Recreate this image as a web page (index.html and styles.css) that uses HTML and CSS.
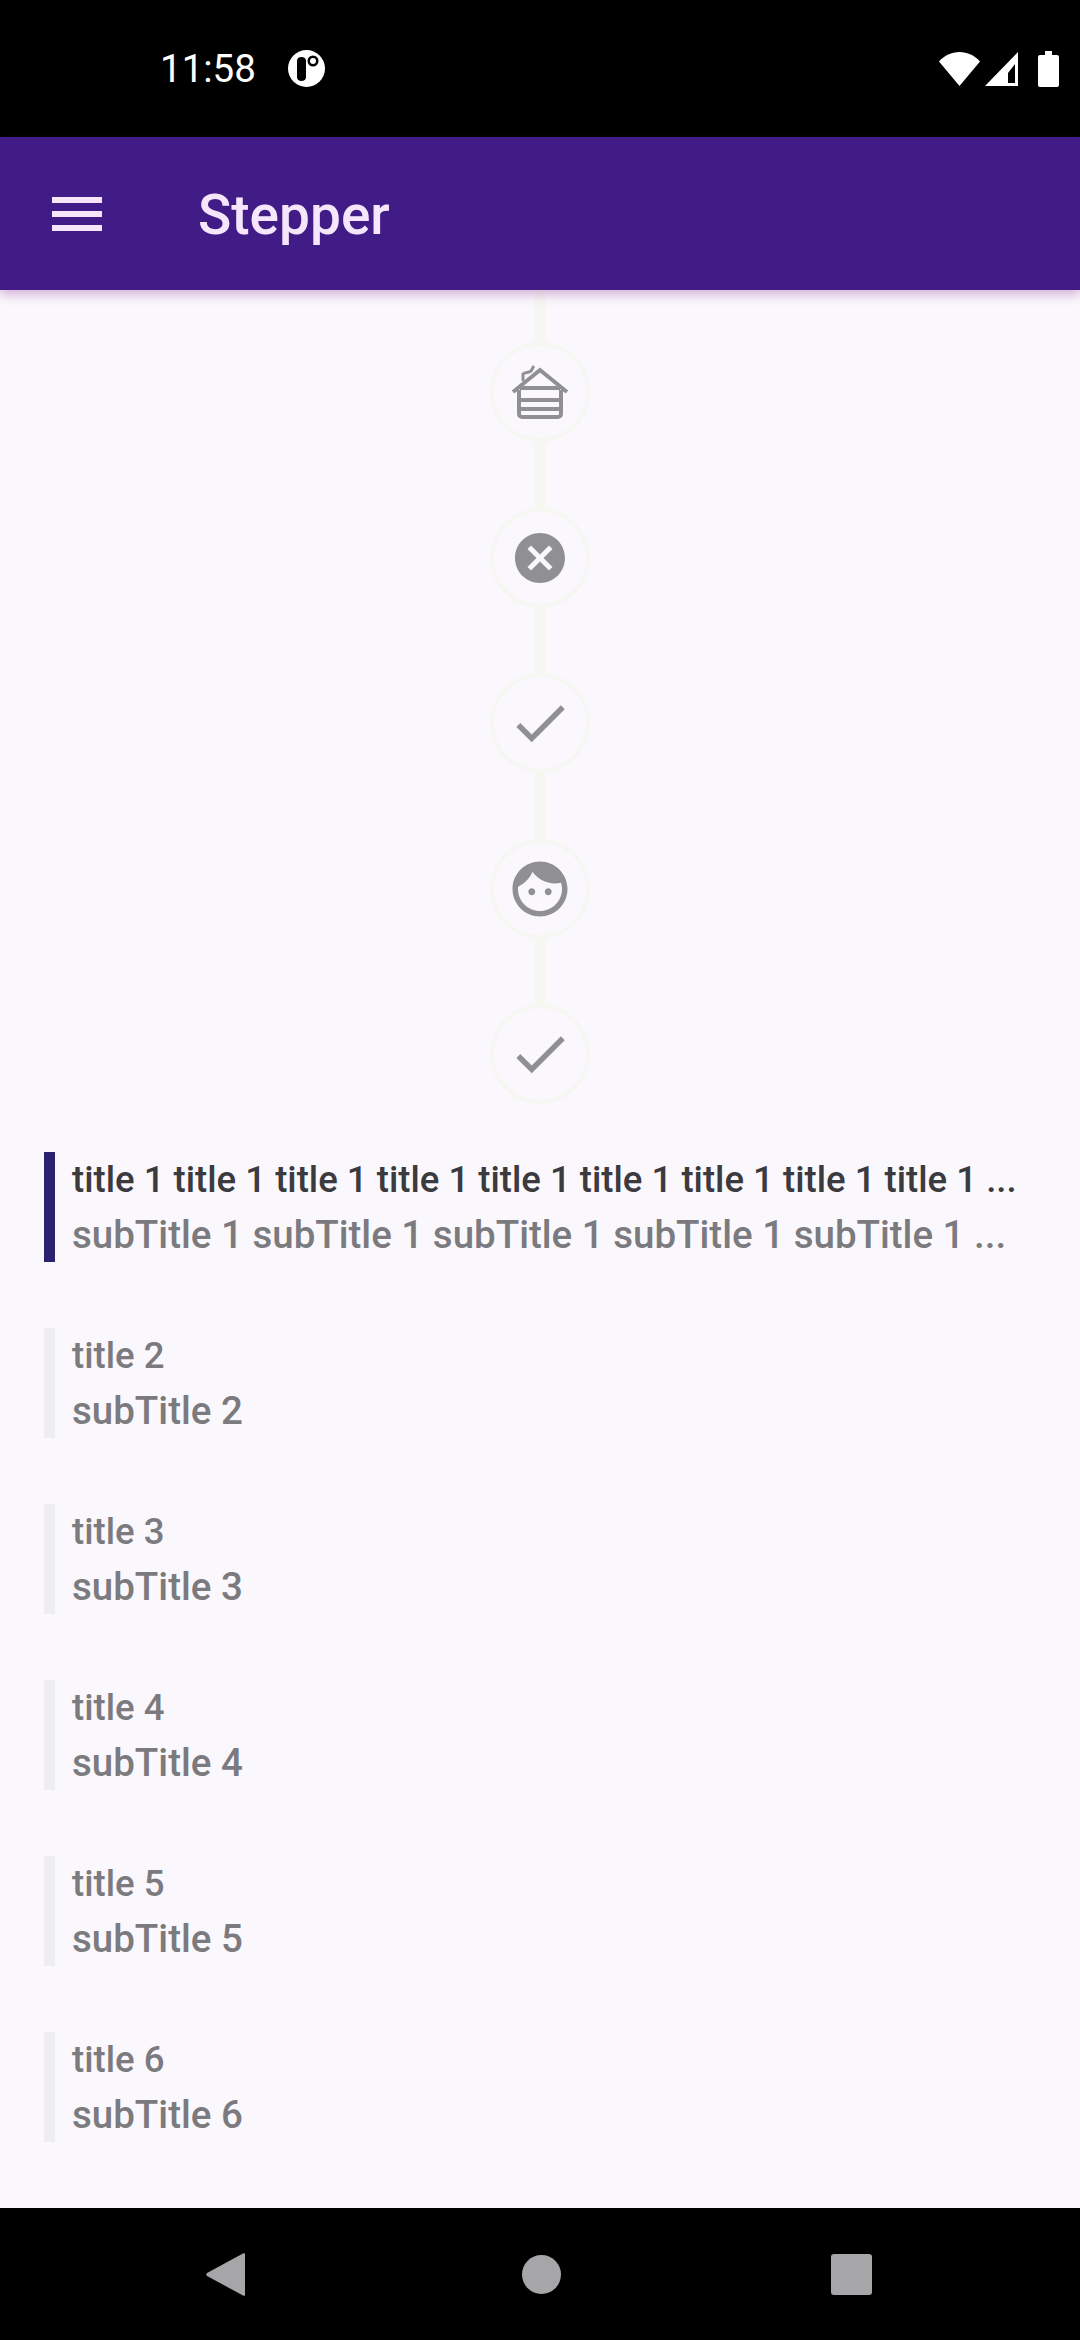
FILE: index.html
```html
<!DOCTYPE html>
<html lang="en">
<head>
  <meta charset="UTF-8">
  <meta name="viewport" content="width=device-width, initial-scale=1.0">
  <title>Stepper</title>
  <link rel="stylesheet" href="styles.css">
</head>
<body>
  <div class="status-bar">
    <div class="status-left">
      <span class="clock">11:58</span>
      <svg class="status-dot" viewBox="0 0 37 37">
        <circle cx="18.5" cy="18.5" r="18.5" fill="#fff"/>
        <path d="M9 11c0-2.500 1.800-4 4.500-4s4.500 1.500 4.500 4v16c0 2.500-1.800 4-4.500 4S9 29.500 9 27z" fill="#000"/>
        <circle cx="25" cy="11" r="5.500" fill="#000"/>
        <circle cx="25" cy="11" r="3" fill="#fff"/>
      </svg>
    </div>
    <div class="status-right">
      <svg class="status-wifi" viewBox="0 0 41 34"><path d="M0 9.500C5.500 3.500 12.500 0 20.500 0S35.500 3.500 41 9.500L20.500 34z" fill="#fff"/></svg>
      <svg class="status-signal" viewBox="0 0 33 34"><path fill-rule="evenodd" d="M33 0v34H0zM30 12l-7 9v10h7z" fill="#fff"/></svg>
      <svg class="status-battery" viewBox="0 0 21 36"><path d="M7 0h7v4h5a2 2 0 0 1 2 2v28a2 2 0 0 1-2 2H2a2 2 0 0 1-2-2V6a2 2 0 0 1 2-2h5z" fill="#fff"/></svg>
    </div>
  </div>

  <header class="app-bar">
    <svg class="menu-icon" viewBox="0 0 50 34">
      <rect width="50" height="6" fill="#f5e6fb"/>
      <rect y="14" width="50" height="6" fill="#f5e6fb"/>
      <rect y="28" width="50" height="6" fill="#f5e6fb"/>
    </svg>
    <h1 class="app-title">Stepper</h1>
  </header>

  <main class="content">
    <div class="stepper">
      <div class="step">
        <svg class="step-icon" viewBox="0 0 66 66">
          <g fill="none" stroke="#908f93">
            <path d="M6 33 33 11l27 22" stroke-width="4"/>
            <path d="M12 31v24a3 3 0 0 0 3 3h36a3 3 0 0 0 3-3V31" stroke-width="4"/>
            <path d="M13 29h40M13 41h40M13 50h40" stroke-width="4"/>
            <path d="M16 22v-7c2-2 6-1 8-3 1-1 1-3 3-5" stroke-width="3"/>
          </g>
        </svg>
      </div>
      <div class="step">
        <svg class="step-icon step-icon-small" viewBox="0 0 24 24"><path d="M12 2C6.470 2 2 6.470 2 12s4.470 10 10 10 10-4.470 10-10S17.530 2 12 2zm5 13.590L15.590 17 12 13.410 8.410 17 7 15.590 10.590 12 7 8.410 8.410 7 12 10.590 15.590 7 17 8.410 13.410 12 17 15.590z" fill="#908f93"/></svg>
      </div>
      <div class="step">
        <svg class="step-icon" viewBox="0 0 24 24"><path d="M9 16.170 4.830 12l-1.420 1.410L9 19 21 7l-1.410-1.410z" fill="#908f93"/></svg>
      </div>
      <div class="step">
        <svg class="step-icon" viewBox="0 0 24 24"><path d="M9 11.750c-.69 0-1.250.56-1.250 1.250s.56 1.250 1.250 1.250 1.250-.56 1.250-1.250-.56-1.250-1.250-1.250zm6 0c-.69 0-1.250.56-1.250 1.250s.56 1.250 1.250 1.250 1.250-.56 1.250-1.250-.56-1.250-1.250-1.250zM12 2C6.480 2 2 6.480 2 12s4.480 10 10 10 10-4.480 10-10S17.520 2 12 2zm0 18c-4.410 0-8-3.590-8-8 0-.29.02-.58.05-.86 2.360-1.050 4.230-2.980 5.210-5.370C11.070 8.330 14.050 10 17.420 10c.78 0 1.530-.09 2.250-.26.21.71.33 1.470.33 2.260 0 4.410-3.590 8-8 8z" fill="#908f93"/></svg>
      </div>
      <div class="step">
        <svg class="step-icon" viewBox="0 0 24 24"><path d="M9 16.170 4.830 12l-1.420 1.410L9 19 21 7l-1.410-1.410z" fill="#908f93"/></svg>
      </div>
    </div>

    <ul class="item-list">
      <li class="item item-active">
        <div class="item-title">title 1 title 1 title 1 title 1 title 1 title 1 title 1 title 1 title 1 ...</div>
        <div class="item-sub">subTitle 1 subTitle 1 subTitle 1 subTitle 1 subTitle 1 ...</div>
      </li>
      <li class="item">
        <div class="item-title">title 2</div>
        <div class="item-sub">subTitle 2</div>
      </li>
      <li class="item">
        <div class="item-title">title 3</div>
        <div class="item-sub">subTitle 3</div>
      </li>
      <li class="item">
        <div class="item-title">title 4</div>
        <div class="item-sub">subTitle 4</div>
      </li>
      <li class="item">
        <div class="item-title">title 5</div>
        <div class="item-sub">subTitle 5</div>
      </li>
      <li class="item">
        <div class="item-title">title 6</div>
        <div class="item-sub">subTitle 6</div>
      </li>
    </ul>
  </main>

  <nav class="nav-bar">
    <svg class="nav-back" viewBox="0 0 39 43"><path d="M39 1v41c0 1-1 1-2 .5L1 23c-1-.8-1-2 0-3L37 .500c1-.5 2-.5 2 .5z" fill="#a6a5a8"/></svg>
    <span class="nav-home"></span>
    <span class="nav-recent"></span>
  </nav>
</body>
</html>
```

FILE: styles.css
```css
* {
  box-sizing: border-box;
}
body {
  margin: 0;
  width: 1080px;
  height: 2340px;
  display: flex;
  flex-direction: column;
  background-color: #faf8fc;
  font-family: Roboto, sans-serif;
  overflow: hidden;
}
.status-bar {
  height: 137px;
  flex: none;
  background-color: #000;
  color: #fff;
  display: flex;
  align-items: center;
  justify-content: space-between;
  padding: 0 21px 0 160px;
}
.status-left {
  display: flex;
  align-items: center;
  gap: 32px;
}
.clock {
  font-size: 38.5px;
  line-height: 45px;
}
.status-dot {
  width: 37px;
  height: 37px;
}
.status-right {
  display: flex;
  align-items: center;
}
.status-wifi {
  width: 41px;
  height: 34px;
  margin-right: 5px;
}
.status-signal {
  width: 33px;
  height: 34px;
  margin-right: 20px;
}
.status-battery {
  width: 21px;
  height: 36px;
}
.app-bar {
  height: 153px;
  flex: none;
  background-color: #421c86;
  display: flex;
  align-items: center;
  padding-left: 52px;
  box-shadow: 0 5px 10px rgba(140, 40, 150, 0.32);
  position: relative;
  z-index: 1;
}
.menu-icon {
  width: 50px;
  height: 34px;
}
.app-title {
  margin: 3px 0 0 96px;
  font-size: 55px;
  font-weight: 500;
  line-height: 64px;
  color: #f5e6fb;
}
.content {
  flex: 1;
}
.stepper {
  position: relative;
  display: flex;
  flex-direction: column;
  align-items: center;
  gap: 65.500px;
  padding-top: 52px;
}
.stepper::before {
  content: "";
  position: absolute;
  left: 535px;
  top: 0;
  bottom: 50px;
  width: 10px;
  background-color: #f6f7f0;
}
.step {
  position: relative;
  width: 100px;
  height: 100px;
  border-radius: 50%;
  background-color: #faf8fc;
  border: 4px solid #f6f6f2;
  display: flex;
  align-items: center;
  justify-content: center;
}
.step-icon {
  width: 66px;
  height: 66px;
}
.step-icon-small {
  width: 60px;
  height: 60px;
}
.item-list {
  list-style: none;
  margin: 0;
  padding: 48px 0 0 44px;
  display: flex;
  flex-direction: column;
  gap: 66px;
}
.item {
  height: 110px;
  width: 990px;
  border-left: 11px solid #eeedf0;
  padding-left: 17px;
  font-size: 38.5px;
  font-weight: 500;
  line-height: 55px;
  color: #7b7a7f;
  white-space: nowrap;
}
.item-title {
  font-size: 36.600px;
}
.item-active {
  border-left-color: #2a2170;
}
.item-active .item-title {
  color: #3b3a3e;
}
.nav-bar {
  height: 132px;
  flex: none;
  background-color: #000;
  position: relative;
  display: flex;
  align-items: center;
  padding: 0 208px 0 206px;
  justify-content: space-between;
}
.nav-back {
  width: 39px;
  height: 43px;
}
.nav-home {
  width: 39px;
  height: 39px;
  margin-left: 6px;
  border-radius: 50%;
  background-color: #a6a5a8;
}
.nav-recent {
  width: 41px;
  height: 41px;
  border-radius: 3px;
  background-color: #a6a5a8;
}
```
